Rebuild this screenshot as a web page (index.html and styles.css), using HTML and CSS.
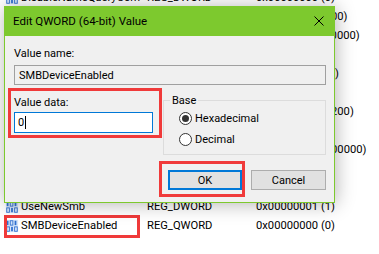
FILE: index.html
```html
<!DOCTYPE html>
<html lang="en">
<head>
<meta charset="UTF-8">
<title>Edit QWORD (64-bit) Value</title>
<link rel="stylesheet" href="styles.css">
</head>
<body>
<svg width="0" height="0" class="defs">
  <symbol id="regbin" viewBox="0 0 16 16">
    <rect x="1" y="1" width="14" height="14" fill="#d6e6fa"/>
    <rect x="2" y="2" width="2" height="5" fill="#2f6fd0"/>
    <rect x="6" y="2" width="3" height="5" fill="none" stroke="#2f6fd0" stroke-width="1"/>
    <rect x="11" y="2" width="2" height="5" fill="#2f6fd0"/>
    <rect x="2" y="9" width="3" height="5" fill="none" stroke="#2f6fd0" stroke-width="1"/>
    <rect x="7" y="9" width="2" height="5" fill="#2f6fd0"/>
    <rect x="11" y="9" width="3" height="5" fill="none" stroke="#2f6fd0" stroke-width="1"/>
  </symbol>
</svg>
<div class="screen">
  <div class="list">
    <div class="row"><span class="name"><svg class="ico"><use href="#regbin"/></svg>DisableNameQueryCom</span><span class="type">REG_DWORD</span><span>0x00000000 (0)</span></div>
    <div class="row"><span class="name"><svg class="ico"><use href="#regbin"/></svg>DormantFileLimit</span><span class="type">REG_DWORD</span><span>0x00000064 (100)</span></div>
    <div class="row"><span class="name"><svg class="ico"><use href="#regbin"/></svg>DirCacheLifetime</span><span class="type">REG_DWORD</span><span>0x0000c350 (50000)</span></div>
    <div class="row"><span class="name"><svg class="ico"><use href="#regbin"/></svg>EnablePlainText</span><span class="type">REG_DWORD</span><span>0x00000001 (1)</span></div>
    <div class="row"><span class="name"><svg class="ico"><use href="#regbin"/></svg>KeepConn</span><span class="type">REG_DWORD</span><span>0x0000002f (47)</span></div>
    <div class="row"><span class="name"><svg class="ico"><use href="#regbin"/></svg>EnableSignature</span><span class="type">REG_DWORD</span><span>0x00000000 (0)</span></div>
    <div class="row"><span class="name"><svg class="ico"><use href="#regbin"/></svg>SessTimeout</span><span class="type">REG_DWORD</span><span>0x000004b0 (1200)</span></div>
    <div class="row"><span class="name"><svg class="ico"><use href="#regbin"/></svg>RequireSignature</span><span class="type">REG_DWORD</span><span>0x00000001 (1)</span></div>
    <div class="row"><span class="name"><svg class="ico"><use href="#regbin"/></svg>MaxCmds</span><span class="type">REG_DWORD</span><span>0x00030d40 (200000)</span></div>
    <div class="row"><span class="name"><svg class="ico"><use href="#regbin"/></svg>ServiceDll</span><span class="type">REG_DWORD</span><span>0x00000000 (0)</span></div>
    <div class="row"><span class="name"><svg class="ico"><use href="#regbin"/></svg>ServiceDllUnload</span><span class="type">REG_DWORD</span><span>0x00000001 (1)</span></div>
    <div class="row"><span class="name"><svg class="ico"><use href="#regbin"/></svg>UseNewSmb</span><span class="type">REG_DWORD</span><span>0x00000001 (1)</span></div>
    <div class="row"><span class="name"><svg class="ico"><use href="#regbin"/></svg>SMBDeviceEnabled</span><span class="type">REG_QWORD</span><span>0x00000000 (0)</span><span class="row-mark"></span></div>
  </div>

  <div class="dialog">
    <div class="title">
      <span>Edit QWORD (64-bit) Value</span>
      <svg class="close" width="10" height="10" viewBox="0 0 10 10"><path d="M0.5 0.5 L9.5 9.5 M9.5 0.5 L0.5 9.5" stroke="#000" stroke-width="1"/></svg>
    </div>
    <div class="body">
      <div class="label">Value name:</div>
      <div class="field">SMBDeviceEnabled</div>
      <div class="lower">
        <div class="mark-box">
          <div class="label">Value data:</div>
          <div class="data-input">0<span class="caret"></span></div>
        </div>
        <fieldset class="base">
          <legend>Base</legend>
          <div class="opt"><span class="radio checked"></span>Hexadecimal</div>
          <div class="opt"><span class="radio"></span>Decimal</div>
        </fieldset>
      </div>
      <div class="btns">
        <div class="ok-mark"><button class="btn default">OK</button></div>
        <button class="btn cancel">Cancel</button>
      </div>
    </div>
  </div>
</div>
</body>
</html>
```

FILE: styles.css
```css
body {
  margin: 0;
  background: #fff;
  font-family: Roboto, "Liberation Sans", sans-serif;
  font-size: 11px;
  color: #000;
}
.defs {
  position: absolute;
}
.screen {
  position: relative;
  width: 379px;
  height: 254px;
  overflow: hidden;
}
.list {
  margin-top: -12px;
}
.row {
  position: relative;
  display: flex;
  align-items: center;
  height: 19px;
  white-space: nowrap;
  font-size: 11.2px;
}
.name {
  display: flex;
  align-items: center;
  width: 147px;
  padding-left: 5px;
  box-sizing: border-box;
  overflow: hidden;
}
.ico {
  width: 14px;
  height: 14px;
  margin-right: 2px;
  flex: none;
}
.type {
  width: 109px;
}
.row-mark {
  position: absolute;
  left: 4px;
  top: -1px;
  width: 136px;
  height: 23px;
  box-sizing: border-box;
  border: 3px solid #f03a3a;
}
.dialog {
  position: absolute;
  left: 4px;
  top: 6px;
  width: 331px;
  box-sizing: border-box;
  background: #f0f0f0;
  border: 1px solid #7dc92e;
  border-top: 0;
  box-shadow: 1px 1px 18px rgba(0, 0, 0, 0.3);
}
.title {
  height: 30px;
  margin: 0 -1px;
  padding: 0 11px 0 9px;
  background: #7dc92e;
  display: flex;
  align-items: center;
  justify-content: space-between;
  font-size: 11.5px;
}
.body {
  padding: 10px 8px 5px 9px;
}
.label {
  line-height: 15px;
}
.field {
  margin-top: 4px;
  height: 20px;
  box-sizing: border-box;
  border: 1px solid #a0a0a0;
  padding-left: 4px;
  display: flex;
  align-items: center;
}
.lower {
  display: flex;
  align-items: flex-start;
  margin-top: 3px;
}
.mark-box {
  width: 154px;
  box-sizing: border-box;
  margin-left: -6px;
  border: 3px solid #f03a3a;
  padding: 4px 0 2px 3px;
}
.data-input {
  margin-top: 2px;
  width: 139px;
  height: 21px;
  box-sizing: border-box;
  border: 1px solid #0078d7;
  background: #fff;
  padding-left: 3px;
  display: flex;
  align-items: center;
}
.caret {
  display: inline-block;
  width: 1px;
  height: 13px;
  background: #000;
  margin-left: 1px;
}
.base {
  flex: 1;
  margin: 5px 0 0 1px;
  padding: 0 0 4px 15px;
  border: 1px solid #dcdcdc;
  min-width: 0;
}
.base legend {
  margin-left: -9px;
  padding: 0 2px;
  line-height: 15px;
}
.opt {
  display: flex;
  align-items: center;
  height: 21px;
}
.radio {
  width: 13px;
  height: 13px;
  box-sizing: border-box;
  border: 1px solid #333;
  border-radius: 50%;
  background: #fff;
  margin-right: 3px;
  display: flex;
  align-items: center;
  justify-content: center;
}
.radio.checked::after {
  content: "";
  width: 7px;
  height: 7px;
  border-radius: 50%;
  background: #333;
}
.btns {
  display: flex;
  justify-content: flex-end;
  align-items: flex-start;
  gap: 6px;
  margin-top: 6px;
}
.ok-mark {
  border: 3px solid #f03a3a;
  padding: 6px 0 4px 6px;
}
.btn {
  height: 20px;
  box-sizing: border-box;
  background: #e1e1e1;
  border: 1px solid #adadad;
  font: inherit;
  color: #000;
  padding: 0;
}
.btn.default {
  width: 74px;
  border: 2px solid #0078d7;
}
.btn.cancel {
  width: 75px;
  margin-top: 9px;
}
```
